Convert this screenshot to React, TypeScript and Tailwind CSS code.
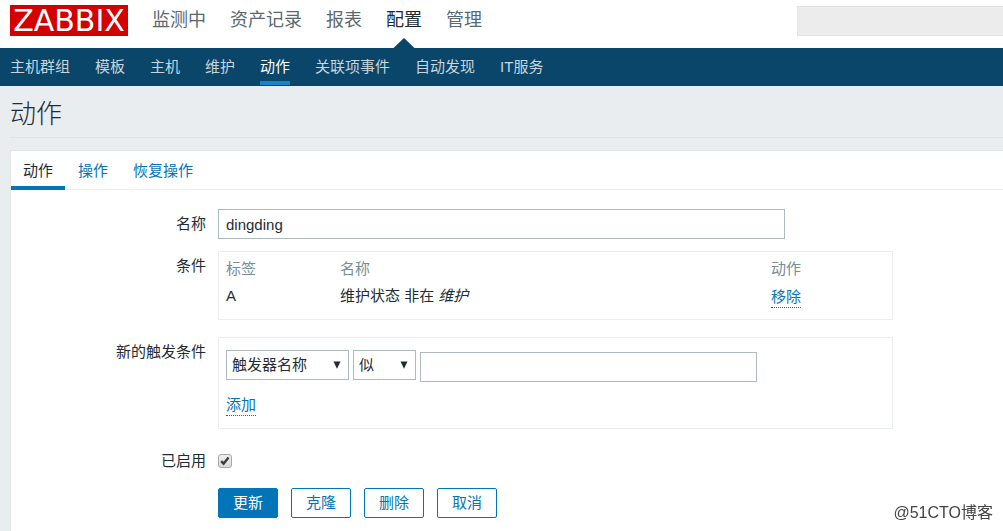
import { useState } from "react";
import type { ReactNode } from "react";

type Condition = {
  label: string;
  name: string;
  value: string;
};

const mainMenu = ["监测中", "资产记录", "报表", "配置", "管理"];
const subMenu = ["主机群组", "模板", "主机", "维护", "动作", "关联项事件", "自动发现", "IT服务"];
const tabs = ["动作", "操作", "恢复操作"];

const initialConditions: Condition[] = [{ label: "A", name: "维护状态 非在", value: "维护" }];

const fieldClass = "h-[30px] border border-[#acbbc2] bg-white text-[15px] text-[#1f2c33] outline-none focus:border-[#0275b8]";
const dottedLink = "inline-block border-b border-dotted border-[#0275b8] leading-5 text-[#0275b8]";

function Row({ label, htmlFor, children }: { label?: string; htmlFor?: string; children: ReactNode }) {
  return (
    <div className="flex gap-3">
      <div className="w-[195px] shrink-0 text-right leading-[30px]">
        {htmlFor ? <label htmlFor={htmlFor}>{label}</label> : label}
      </div>
      <div className="min-w-0 flex-1">{children}</div>
    </div>
  );
}

function Select({ label, options, className }: { label: string; options: string[]; className: string }) {
  return (
    <div className={`relative ${className}`}>
      <select aria-label={label} className={`${fieldClass} w-full appearance-none pl-[5px] pr-5`}>
        {options.map((o) => (
          <option key={o}>{o}</option>
        ))}
      </select>
      <svg className="pointer-events-none absolute right-2 top-[11px] h-2 w-2" viewBox="0 0 8 8" aria-hidden>
        <path d="M0.5 0.5h7L4 7.8z" fill="#1f2c33" />
      </svg>
    </div>
  );
}

export default function App() {
  const [tab, setTab] = useState("动作");
  const [name, setName] = useState("dingding");
  const [enabled, setEnabled] = useState(true);
  const [conditions, setConditions] = useState<Condition[]>(initialConditions);

  return (
    <div className="flex min-h-screen flex-col overflow-x-hidden bg-[#e9edf0] font-['Liberation_Sans','Noto_Sans_CJK_SC',sans-serif] text-[15px] text-[#1f2c33]">
      <header className="flex h-12 items-start bg-white pl-2.5 pt-[5px]">
        <a
          href="#"
          className="flex h-[31px] w-[118px] items-center justify-center bg-[#d40000] font-['DejaVu_Sans',sans-serif] text-[30px] leading-none text-white"
        >
          ZABBIX
        </a>
        <nav className="ml-6 flex gap-6 text-[18px] leading-[30px]">
          {mainMenu.map((m) => (
            <a key={m} href="#" className={m === "配置" ? "relative h-[43px] text-[#1f2c33]" : "text-[#5a6870]"}>
              {m}
              {m === "配置" && (
                <svg className="absolute bottom-0 left-[7px] h-2.5 w-[22px]" viewBox="0 0 22 10" aria-hidden>
                  <path d="M11 0L21.5 10H0.5z" fill="#0a466a" />
                </svg>
              )}
            </a>
          ))}
        </nav>
        <input
          type="text"
          aria-label="搜索"
          className="ml-auto mt-px h-[30px] w-[206px] border border-r-0 border-[#e2e4e4] bg-[#ececec] px-2 outline-none"
        />
      </header>

      <nav className="flex h-[38px] gap-[25px] bg-[#0a466a] px-2.5 leading-[37px]">
        {subMenu.map((m) => (
          <a
            key={m}
            href="#"
            className={`h-[37px] whitespace-nowrap ${
              m === "动作" ? "border-b-4 border-[#1683cc] text-white" : "text-[#c8d5dd]"
            }`}
          >
            {m}
          </a>
        ))}
      </nav>

      <div className="ml-2.5 h-[52px] border-b border-[#dfe4e7]">
        <h1 className="text-[26px] font-light leading-[56px]">动作</h1>
      </div>

      <main className="ml-2.5 mt-3 flex-1 border-l border-t border-[#dfe4e7] bg-white">
        <div role="tablist" className="flex h-[39px] gap-px border-b border-[#ebeeee]">
          {tabs.map((t) => (
            <button
              key={t}
              type="button"
              role="tab"
              aria-selected={t === tab}
              onClick={() => setTab(t)}
              className={`h-[39px] border-b-4 px-3 pt-1.5 ${
                t === tab ? "border-[#0275b8] text-[#1f2c33]" : "border-transparent text-[#0275b8]"
              }`}
            >
              {t}
            </button>
          ))}
        </div>

        <form className="flex flex-col gap-3 pb-3 pr-3 pt-[19px]" onSubmit={(e) => e.preventDefault()}>
          <Row label="名称" htmlFor="name">
            <input
              id="name"
              type="text"
              value={name}
              onChange={(e) => setName(e.target.value)}
              className={`${fieldClass} block w-full max-w-[567px] px-[7px]`}
            />
          </Row>

          <Row label="条件">
            <div className="mb-[5px] max-w-[675px] border border-[#ebeeee] pb-[9px] pl-[7px] pt-1">
              <table className="w-full table-fixed text-left">
                <thead>
                  <tr className="h-[27px] text-[#768d99]">
                    <th className="w-[114px] font-normal">标签</th>
                    <th className="font-normal">名称</th>
                    <th className="w-[121px] font-normal">动作</th>
                  </tr>
                </thead>
                <tbody>
                  {conditions.map((c) => (
                    <tr key={c.label} className="h-[27px]">
                      <td>{c.label}</td>
                      <td>
                        {c.name} <em>{c.value}</em>
                      </td>
                      <td>
                        <button
                          type="button"
                          className={`${dottedLink} align-middle`}
                          onClick={() => setConditions((prev) => prev.filter((p) => p.label !== c.label))}
                        >
                          移除
                        </button>
                      </td>
                    </tr>
                  ))}
                </tbody>
              </table>
            </div>
          </Row>

          <Row label="新的触发条件">
            <div className="mb-[5px] max-w-[675px] border border-[#ebeeee] px-[7px] py-3">
              <div className="flex gap-1">
                <Select label="条件类型" options={["触发器名称"]} className="w-[123px]" />
                <Select label="运算符" options={["似"]} className="w-[63px]" />
                <input type="text" aria-label="值" className={`${fieldClass} mt-0.5 w-[337px] min-w-0 px-[7px]`} />
              </div>
              <div className="mt-[13px] flex">
                <button type="button" className={dottedLink}>
                  添加
                </button>
              </div>
            </div>
          </Row>

          <Row label="已启用" htmlFor="enabled">
            <div className="flex h-[30px] items-center">
              <div className="relative h-3.5 w-3.5">
                <input
                  id="enabled"
                  type="checkbox"
                  checked={enabled}
                  onChange={(e) => setEnabled(e.target.checked)}
                  className="block h-3.5 w-3.5 appearance-none rounded-[3px] border border-[#a8a8a8] bg-gradient-to-b from-[#eeeeee] to-[#dcdcdc]"
                />
                {enabled && (
                  <svg className="pointer-events-none absolute inset-0 h-3.5 w-3.5" viewBox="0 0 14 14" aria-hidden>
                    <path d="M3.2 7.2l2.4 2.5 4.9-6.2" fill="none" stroke="#3c3c3c" strokeWidth="2.4" />
                  </svg>
                )}
              </div>
            </div>
          </Row>

          <Row>
            <div className="flex gap-[13px]">
              <button type="submit" className="h-[30px] w-[60px] rounded-[2px] border border-[#0275b8] bg-[#0275b8] text-white">
                更新
              </button>
              {["克隆", "删除", "取消"].map((b) => (
                <button
                  key={b}
                  type="button"
                  className="h-[30px] w-[60px] rounded-[2px] border border-[#0275b8] bg-white text-[#0275b8]"
                >
                  {b}
                </button>
              ))}
            </div>
          </Row>
        </form>
      </main>

      <span className="pointer-events-none fixed bottom-2 right-2.5 text-[16px] leading-5 text-[#444444]">@51CTO博客</span>
    </div>
  );
}
